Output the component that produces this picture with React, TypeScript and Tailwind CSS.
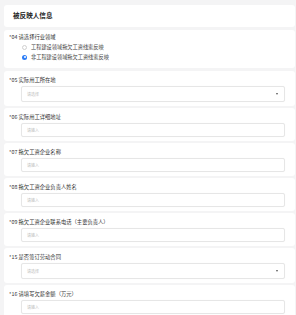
const font = { fontFamily: '"Noto Sans CJK SC", "Noto Sans", sans-serif' };

function Label({ text }: { text: string }) {
  const [num, ...rest] = text.split(" ");
  return (
    <p className="h-[8px] pl-[5px] text-[5.3px] leading-[8px] text-[#333]">
      <span className="text-[#333]">*</span>
      {num} {rest.join(" ")}
    </p>
  );
}

function Input({ placeholder }: { placeholder: string }) {
  return (
    <div className="ml-[17px] mr-[10px] mt-[2px] flex h-[14px] items-center rounded-[2px] border border-[#e6e6e6] pl-[5px] shadow-[0_0_1px_rgba(0,0,0,0.06)]">
      <span className="text-[4px] text-[#bdbdbd]">{placeholder}</span>
    </div>
  );
}

function Select({ placeholder }: { placeholder: string }) {
  return (
    <div className="ml-[17px] mr-[10px] mt-[2px] flex h-[16px] items-center justify-between rounded-[2px] border border-[#e6e6e6] pl-[5px] pr-[6px] shadow-[0_0_1px_rgba(0,0,0,0.06)]">
      <span className="text-[4px] text-[#bdbdbd]">{placeholder}</span>
      <span className="h-0 w-0 border-x-[1.5px] border-t-[2px] border-x-transparent border-t-[#555]" />
    </div>
  );
}

function Card({ children, className = "" }: { children: React.ReactNode; className?: string }) {
  return (
    <div className={"ml-[4px] mr-[1px] rounded-[3px] bg-white " + className}>{children}</div>
  );
}

const fields: { label: string; kind: "input" | "select" }[] = [
  { label: "05 实际用工所在地", kind: "select" },
  { label: "06 实际用工详细地址", kind: "input" },
  { label: "07 拖欠工资企业名称", kind: "input" },
  { label: "08 拖欠工资企业负责人姓名", kind: "input" },
  { label: "09 拖欠工资企业联系电话（主要负责人）", kind: "input" },
  { label: "15 是否签订劳动合同", kind: "select" },
  { label: "16 请填写欠薪金额（万元）", kind: "input" },
];

export default function App() {
  return (
    <div className="h-[315px] w-[296px] overflow-hidden bg-[#f4f4f5] pt-[5px]" style={font}>
      <Card className="flex h-[22px] items-center pl-[9px]">
        <h1 className="text-[6.6px] font-bold text-[#222]">被反映人信息</h1>
      </Card>

      <Card className="mt-[3px] h-[38px] pt-[3px]">
        <Label text="04 请选择行业领域" />
        <div className="mt-[2px] flex items-center gap-[4px] pl-[18px]">
          <span className="h-[5px] w-[5px] rounded-full border border-[#d0d0d0] bg-white" />
          <span className="text-[5.2px] leading-[8px] text-[#444]">工程建设领域拖欠工资线索反映</span>
        </div>
        <div className="mt-[2px] flex items-center gap-[4px] pl-[18px]">
          <span className="flex h-[5px] w-[5px] items-center justify-center rounded-full bg-[#2b7cf6]">
            <span className="h-[2px] w-[2px] rounded-full bg-white" />
          </span>
          <span className="text-[5.2px] leading-[8px] text-[#444]">非工程建设领域拖欠工资线索反映</span>
        </div>
      </Card>

      {fields.map((f, i) => (
        <Card key={f.label} className={(i === 0 ? "mt-[3px]" : "mt-[2px]") + " pb-[4px] pt-[5px]"}>
          <Label text={f.label} />
          {f.kind === "select" ? <Select placeholder="请选择" /> : <Input placeholder="请输入" />}
        </Card>
      ))}
    </div>
  );
}
